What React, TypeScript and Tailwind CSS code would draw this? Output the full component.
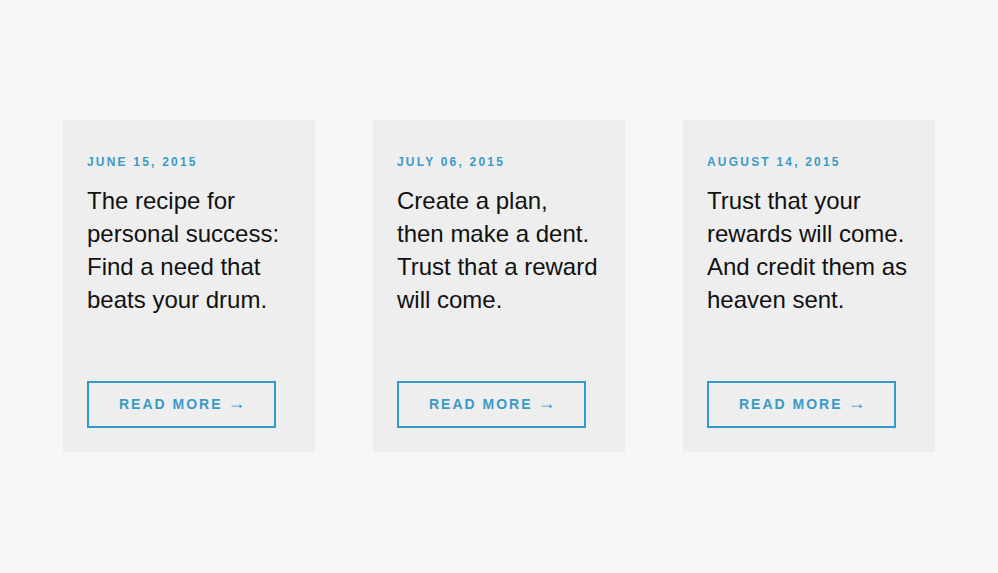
const posts = [
  { date: 'June 15, 2015', title: 'The recipe for personal success: Find a need that beats your drum.' },
  { date: 'July 06, 2015', title: 'Create a plan, then make a dent. Trust that a reward will come.' },
  { date: 'August 14, 2015', title: 'Trust that your rewards will come. And credit them as heaven sent.' },
]

export default function App() {
  return (
    <div className="min-h-[573px] w-full bg-[#f7f7f7] pt-[120px] font-['Liberation_Sans',Arial,sans-serif]">
      <div className="flex justify-center gap-[58px]">
        {posts.map((post) => (
          <article
            key={post.date}
            className="flex h-[332px] w-[252px] flex-col justify-between bg-[#eeeeee] px-6 pt-[34px] pb-6"
          >
            <div>
              <p className="text-[12px] leading-4 font-bold tracking-[2.2px] text-[#3a9ac6] uppercase">
                {post.date}
              </p>
              <h2 className="mt-[14px] text-[24px] leading-[33px] text-[#111111]">{post.title}</h2>
            </div>
            <a
              href="#"
              className="flex h-[47px] w-[189px] items-center border-2 border-[#3399c9] pl-[30px] text-[14px] font-bold tracking-[2px] text-[#3a9ac6]"
            >
              READ MORE
              <span className="ml-[5px] -translate-y-[2px] text-[18px] leading-none font-normal tracking-normal">
                →
              </span>
            </a>
          </article>
        ))}
      </div>
    </div>
  )
}
